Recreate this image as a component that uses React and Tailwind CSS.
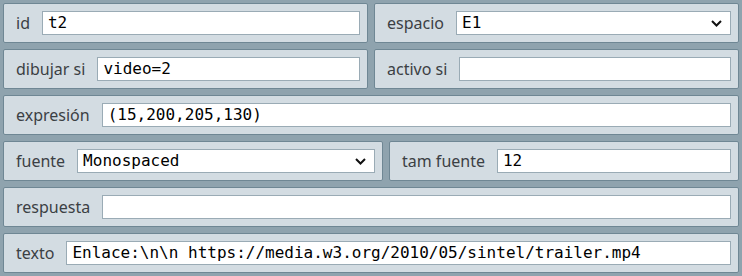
import { useState } from 'react'

const LABEL = 'text-[16px] text-[#3b4044] whitespace-nowrap shrink-0'
const BOX = 'flex-1 min-w-0 h-[24px] bg-white border border-[#9aabb5] px-[5px] text-[16px] text-black outline-none'

function Panel({ label, className = 'flex-1', children }) {
  return (
    <div className={`${className} h-[40px] flex items-center gap-3 pl-3 pr-[7px] bg-[#d3dce2] border border-[#6f8794] rounded-[2px]`}>
      <span className={LABEL}>{label}</span>
      {children}
    </div>
  )
}

function Field({ value }) {
  const [v, setV] = useState(value)
  return (
    <input
      className={BOX}
      style={{ fontFamily: '"DejaVu Sans Mono", monospace' }}
      value={v}
      onChange={(e) => setV(e.target.value)}
    />
  )
}

function Select({ value }) {
  return (
    <div className={`${BOX} flex items-center justify-between pr-[8px]`} style={{ fontFamily: '"DejaVu Sans Mono", monospace' }}>
      <span>{value}</span>
      <svg width="11" height="7" viewBox="0 0 11 7">
        <polyline points="1,1 5.5,5.5 10,1" fill="none" stroke="#111" strokeWidth="2" />
      </svg>
    </div>
  )
}

export default function App() {
  return (
    <div
      className="w-[742px] h-[276px] bg-[#8fa3ae] p-[3px] flex flex-col gap-[6px]"
      style={{ fontFamily: '"Noto Sans", sans-serif' }}
    >
      <div className="flex gap-[6px]">
        <Panel label="id"><Field value="t2" /></Panel>
        <Panel label="espacio"><Select value="E1" /></Panel>
      </div>
      <div className="flex gap-[6px]">
        <Panel label="dibujar si"><Field value="video=2" /></Panel>
        <Panel label="activo si"><Field value="" /></Panel>
      </div>
      <div className="flex">
        <Panel label="expresión"><Field value="(15,200,205,130)" /></Panel>
      </div>
      <div className="flex gap-[6px]">
        <Panel label="fuente" className="w-[380px] shrink-0"><Select value="Monospaced" /></Panel>
        <Panel label="tam fuente"><Field value="12" /></Panel>
      </div>
      <div className="flex">
        <Panel label="respuesta"><Field value="" /></Panel>
      </div>
      <div className="flex">
        <Panel label="texto"><Field value="Enlace:\n\n https://media.w3.org/2010/05/sintel/trailer.mp4" /></Panel>
      </div>
    </div>
  )
}
